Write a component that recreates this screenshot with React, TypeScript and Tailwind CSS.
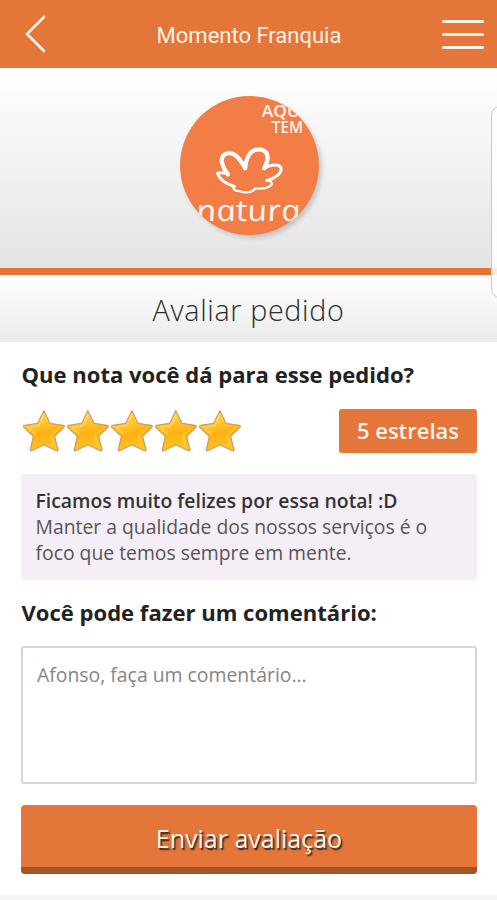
import { useState } from 'react';

const STARS = [1, 2, 3, 4, 5];

function Star() {
  return (
    <svg viewBox="34 29 132.6 132" className="w-[44.2px] h-[44px] shrink-0">
      <defs>
        <linearGradient id="star-fill" x1="0" y1="0" x2="0.25" y2="1">
          <stop offset="0" stopColor="#ffe27a" />
          <stop offset="0.35" stopColor="#ffc938" />
          <stop offset="0.65" stopColor="#ffb010" />
          <stop offset="1" stopColor="#ffc426" />
        </linearGradient>
      </defs>
      <path
        d="M99.5 34 L118 72 L157 78 Q164 80 159 85 L132 111 L142 152 Q141 156 137 154 L99.5 136 L63 154 Q58 156 59 151 L68 111 L40 85 Q36 80 42 78 L81 72 Z"
        fill="url(#star-fill)"
        stroke="#cf9a62"
        strokeWidth="3.5"
        strokeLinejoin="round"
      />
      <path d="M99 45 L85 78 L54 85 L76 106" fill="none" stroke="#ffed9c" strokeWidth="6" strokeLinejoin="round" opacity="0.3" />
      <path d="M146 86 L121 108 L128 139" fill="none" stroke="#ffe36a" strokeWidth="6" strokeLinejoin="round" opacity="0.4" />
    </svg>
  );
}

function Logo() {
  return (
    <div className="w-[139px] h-[139px] rounded-full overflow-hidden bg-[#f27d46] shadow-[3px_3px_4px_rgba(0,0,0,0.16)]">
      <svg viewBox="60 47 416 416" className="w-full h-full">
        <g fill="#fff4ec" fontFamily="'Open Sans', sans-serif">
          <text x="305" y="110" fontSize="46" fontWeight="600" textLength="130" lengthAdjust="spacingAndGlyphs">AQUI</text>
          <text x="335" y="159" fontSize="46" fontWeight="600" textLength="94" lengthAdjust="spacingAndGlyphs">TEM</text>
          {/* upright single-storey letters: italic straightened back */}
          <text
            x="0"
            y="0"
            fontSize="89"
            fontWeight="500"
            fontStyle="italic"
            textLength="312"
            lengthAdjust="spacingAndGlyphs"
            transform="translate(114 421) skewX(12)"
          >
            natura
          </text>
        </g>
        <g transform="translate(135 174)" fill="none" stroke="#fff" strokeLinecap="round" strokeLinejoin="round">
          <path
            strokeWidth="13"
            d="M68 107 C50 84 46 62 54 52 C64 40 84 42 95 54 C107 65 114 78 120 89 C122 64 132 40 150 34 C170 29 186 38 187 55 C188 68 182 79 177 89"
          />
          <path
            strokeWidth="9"
            d="M177 89 C194 79 220 74 227 87 C231 104 210 120 185 126 M68 107 C58 103 50 101 37 104 C42 122 63 136 88 144"
          />
          <path strokeWidth="6.5" d="M185 126 C202 128 204 137 194 143 C182 150 164 151 150 149 M88 144 C80 150 90 158 104 158 M104 158 C120 164 142 163 150 150" />
        </g>
      </svg>
    </div>
  );
}

export default function App() {
  const [comment, setComment] = useState('');

  return (
    <div className="relative w-full h-[900px] overflow-hidden bg-white flex flex-col font-['Open_Sans',sans-serif] text-[#222]">
      <header className="h-[68px] shrink-0 bg-[#e57639] border-b border-[#d87239] flex items-center justify-between pt-px pl-[25px] pr-[13px]">
        <button type="button" aria-label="Voltar" className="w-[42px]">
          <svg viewBox="0 0 22 38" className="w-[22px] h-[38px]" fill="none" stroke="#fff4ec" strokeWidth="2.6" strokeLinecap="round">
            <path d="M19 2 L2 19 L19 36" />
          </svg>
        </button>
        <h1 className="pt-[3px] pr-[11px] font-[Roboto,sans-serif] text-[22px] text-[#fff1e6]">Momento Franquia</h1>
        <button type="button" aria-label="Menu" className="mt-px flex flex-col gap-[10px] w-[42px]">
          <span className="h-[3px] rounded-full bg-[#fff1e6]" />
          <span className="h-[3px] rounded-full bg-[#fff1e6]" />
          <span className="h-[3px] rounded-full bg-[#fff1e6]" />
        </button>
      </header>

      <section className="h-[200px] shrink-0 bg-linear-to-b from-white to-[#e4e4e4] flex justify-center pt-[28px] pl-[2px]">
        <Logo />
      </section>

      <section className="h-[74px] shrink-0 border-t-[7px] border-[#e57333] bg-linear-to-b from-white to-[#ebebeb] flex items-center justify-center">
        <h2 className="pt-[2px] text-[28.7px] font-[360] tracking-[0.65px] text-[#2c2c2c]">Avaliar pedido</h2>
      </section>

      <main className="flex flex-col pl-[21px] pr-[20px] pt-[17px]">
        <h3 className="pl-[0.5px] text-[22.05px] leading-[30px] font-bold">Que nota você dá para esse pedido?</h3>

        <div className="mt-[20px] h-[44px] flex items-center justify-between">
          <div className="flex pl-[0.5px]">
            {STARS.map((n) => (
              <Star key={n} />
            ))}
          </div>
          <span className="w-[138px] h-[44px] rounded-[3px] bg-[#e57639] text-[#fff4ec] text-[22px] leading-[42px] text-center font-semibold">
            5 estrelas
          </span>
        </div>

        <div className="mt-[21px] h-[106px] rounded-[4px] bg-[#f6eef6] px-[14.5px] pt-[14px] text-[19.35px] leading-[26px] text-[#555]">
          <p className="font-semibold text-[#333]">Ficamos muito felizes por essa nota! :D</p>
          <p>Manter a qualidade dos nossos serviços é o foco que temos sempre em mente.</p>
        </div>

        <h3 className="mt-[17px] pl-[0.5px] text-[22.05px] leading-[30px] font-bold">Você pode fazer um comentário:</h3>

        <textarea
          value={comment}
          onChange={(e) => setComment(e.target.value)}
          placeholder="Afonso, faça um comentário..."
          className="mt-[19px] h-[138px] w-full resize-none rounded-[3px] border-2 border-[#d5d5d5] bg-white px-[14px] py-[13px] text-[19.4px] leading-[27px] placeholder:text-[#858585]"
        />

        <button
          type="button"
          className="mt-[21px] h-[69px] rounded-[4px] border-b-[7px] border-[#a65324] bg-[#e57639] pt-1.5 text-[25px] text-[#fff4ec] [text-shadow:1.5px_1.5px_1.5px_#222]"
        >
          Enviar avaliação
        </button>
      </main>

      <div className="mt-auto h-[5px] shrink-0 bg-[#f5f3f6]" />

      {/* edge panel handle */}
      <div className="absolute top-[106px] -right-[20px] w-[26px] h-[192px] rounded-[9px] border border-[#c9c9c9] bg-white/85" />
    </div>
  );
}
